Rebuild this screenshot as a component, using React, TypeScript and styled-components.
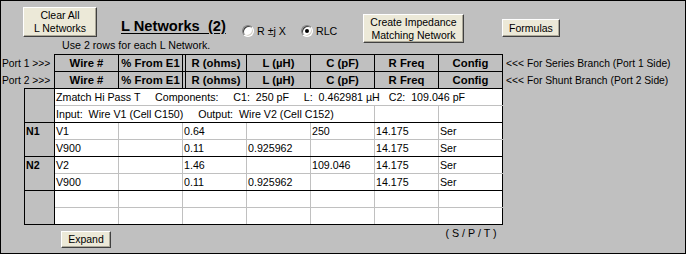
import React from "react";
import styled, { createGlobalStyle } from "styled-components";

const Global = createGlobalStyle`
  html, body { margin: 0; padding: 0; background: #c0c0c0; }
  body { font-family: "Liberation Sans", Arial, sans-serif; }
`;

const COL = 64;

const Panel = styled.div`
  width: 686px;
  height: 254px;
  box-sizing: border-box;
  border: 1px solid #000;
  background: #c0c0c0;
  color: #000;
  font-family: "Liberation Sans", Arial, sans-serif;
  font-size: 10.667px;
  display: flex;
  flex-direction: column;
  overflow: hidden;
`;

const Toolbar = styled.div`
  height: 36px;
  flex: none;
  display: flex;
  align-items: flex-start;
`;

const Button = styled.button<{ $w: number; $h: number; $mt: number; $ml: number }>`
  box-sizing: border-box;
  width: ${(p) => p.$w}px;
  height: ${(p) => p.$h}px;
  margin: ${(p) => p.$mt}px 0 0 ${(p) => p.$ml}px;
  padding: 0;
  flex: none;
  background: #ece9d8;
  border: 1px solid;
  border-color: #ffffff #404040 #404040 #ffffff;
  box-shadow: inset -1px -1px 0 #aca899;
  font-family: "Liberation Sans", Arial, sans-serif;
  font-size: 10.5px;
  line-height: 13px;
  color: #000;
  text-align: center;
  display: flex;
  flex-direction: column;
  align-items: center;
  justify-content: center;
`;

const Title = styled.div`
  width: 107px;
  margin: 17px 0 0 24px;
  flex: none;
  font-size: 14.667px;
  font-weight: bold;
  line-height: 17px;
  text-decoration: underline;
  text-underline-offset: 2px;
  white-space: pre;
`;

const RadioOption = styled.label<{ $w: number; $ml: number }>`
  width: ${(p) => p.$w}px;
  margin: 21px 0 0 ${(p) => p.$ml}px;
  flex: none;
  height: 17px;
  display: flex;
  align-items: center;
  gap: 3px;
  white-space: pre;
`;

const RadioCircle = styled.span<{ $on: boolean }>`
  box-sizing: border-box;
  width: 12px;
  height: 12px;
  border-radius: 50%;
  background: #fff;
  border: 1px solid;
  border-color: #808080 #ffffff #ffffff #808080;
  box-shadow: inset 1px 1px 0 #404040, inset -1px -1px 0 #d4d0c8;
  display: flex;
  align-items: center;
  justify-content: center;
  flex: none;
  &::after {
    content: "";
    width: 4px;
    height: 4px;
    border-radius: 50%;
    background: ${(p) => (p.$on ? "#000" : "transparent")};
  }
`;

const NoteRow = styled.div`
  height: 17px;
  flex: none;
  line-height: 17px;
  padding-left: 61px;
  white-space: pre;
`;

const HeaderRow = styled.div<{ $first: boolean }>`
  display: flex;
  flex: none;
  height: ${(p) => (p.$first ? 18 : 16)}px;
`;

const PortLabel = styled.div`
  width: 53px;
  flex: none;
  box-sizing: border-box;
  padding-left: 1px;
  display: flex;
  align-items: center;
  font-size: 10.3px;
  white-space: pre;
`;

const HCells = styled.div<{ $first: boolean }>`
  display: flex;
  flex: none;
  border-left: 1px solid #000;
  border-top: ${(p) => (p.$first ? "1px solid #000" : "none")};
`;

const HCell = styled.div<{ $first: boolean; $split?: boolean }>`
  box-sizing: border-box;
  width: ${(p) => (p.$split ? COL - 2 : COL)}px;
  flex: none;
  border-right: 1px solid #000;
  border-left: ${(p) => (p.$split ? "1px solid #000" : "none")};
  border-bottom: ${(p) => (p.$first ? "1px solid #000" : "none")};
  font-size: 11.3px;
  font-weight: bold;
  line-height: 16px;
  text-align: center;
  white-space: pre;
`;

const HGap = styled.div<{ $first: boolean }>`
  width: 2px;
  flex: none;
  box-sizing: border-box;
  border-bottom: ${(p) => (p.$first ? "1px solid #000" : "none")};
`;

const SideNote = styled.div`
  padding-left: 3px;
  display: flex;
  align-items: center;
  font-size: 10.3px;
  white-space: pre;
`;

const BodyTable = styled.div`
  margin-left: 23px;
  width: 479px;
  box-sizing: border-box;
  border-left: 1px solid #000;
  border-top: 1px solid #000;
  flex: none;
  display: flex;
  flex-direction: column;
`;

const Group = styled.div`
  display: flex;
`;

const GroupLabel = styled.div`
  box-sizing: border-box;
  width: 30px;
  flex: none;
  background: #c0c0c0;
  border-right: 1px solid #000;
  border-bottom: 1px solid #000;
  padding-left: 1px;
  font-weight: bold;
  line-height: 16px;
`;

const GroupRows = styled.div`
  display: flex;
  flex-direction: column;
`;

const Row = styled.div<{ $end: boolean }>`
  display: flex;
  box-sizing: border-box;
  height: 17px;
  background: #fff;
  border-bottom: 1px solid ${(p) => (p.$end ? "#000" : "#c0c0c0")};
`;

const Cell = styled.div<{ $span: number }>`
  box-sizing: border-box;
  width: ${(p) => p.$span * COL}px;
  flex: none;
  height: 16px;
  line-height: 16px;
  padding-left: 1px;
  border-right: 1px solid #c0c0c0;
  white-space: pre;
  &:last-child {
    border-right-color: #000;
  }
`;

const Footer = styled.div`
  display: flex;
  align-items: flex-start;
  flex: none;
`;

const FooterNote = styled.div`
  width: ${COL}px;
  margin: 0 182px 0 auto;
  line-height: 17px;
  text-align: center;
  white-space: pre;
`;

type CellDef = { span: number; text: string };
type RowDef = CellDef[];
type GroupDef = { label: string; rows: RowDef[] };

const plain = (vals: string[]): RowDef => vals.map((text) => ({ span: 1, text }));

const groups: GroupDef[] = [
  {
    label: "",
    rows: [
      [
        {
          span: 7,
          text: "Zmatch Hi Pass T     Components:     C1:  250 pF     L:  0.462981 \u00b5H   C2:  109.046 pF",
        },
      ],
      [
        { span: 5, text: "Input:  Wire V1 (Cell C150)     Output:  Wire V2 (Cell C152)" },
        { span: 1, text: "" },
        { span: 1, text: "" },
      ],
    ],
  },
  {
    label: "N1",
    rows: [
      plain(["V1", "", "0.64", "", "250", "14.175", "Ser"]),
      plain(["V900", "", "0.11", "0.925962", "", "14.175", "Ser"]),
    ],
  },
  {
    label: "N2",
    rows: [
      plain(["V2", "", "1.46", "", "109.046", "14.175", "Ser"]),
      plain(["V900", "", "0.11", "0.925962", "", "14.175", "Ser"]),
    ],
  },
  {
    label: "",
    rows: [plain(["", "", "", "", "", "", ""]), plain(["", "", "", "", "", "", ""])],
  },
];

const headers = ["Wire #", "% From E1", "R (ohms)", "L (\u00b5H)", "C (pF)", "R Freq", "Config"];

const headerRows = [
  { port: "Port 1 >>>", note: "<<< For Series Branch (Port 1 Side)" },
  { port: "Port 2 >>>", note: "<<< For Shunt Branch (Port 2 Side)" },
];

export default function App() {
  return (
    <>
      <Global />
      <Panel>
        <Toolbar>
          <Button $w={74} $h={30} $mt={6} $ml={22}>
            <span>Clear All</span>
            <span>L Networks</span>
          </Button>
          <Title>{"L Networks  (2)"}</Title>
          <RadioOption $w={59} $ml={14}>
            <RadioCircle $on={false} />
            <span>R ±j X</span>
          </RadioOption>
          <RadioOption $w={62} $ml={0}>
            <RadioCircle $on={true} />
            <span>RLC</span>
          </RadioOption>
          <Button $w={101} $h={29} $mt={13} $ml={0}>
            <span>Create Impedance</span>
            <span>Matching Network</span>
          </Button>
          <Button $w={58} $h={18} $mt={18} $ml={38}>
            <span>Formulas</span>
          </Button>
        </Toolbar>
        <NoteRow>Use 2 rows for each L Network.</NoteRow>
        {headerRows.map((hr, i) => {
          const first = i === 0;
          return (
            <HeaderRow key={hr.port} $first={first}>
              <PortLabel>{hr.port}</PortLabel>
              <HCells $first={first}>
                {headers.map((h, j) => (
                  <React.Fragment key={h}>
                    {j === 2 && <HGap $first={first} />}
                    <HCell $first={first} $split={j === 2}>
                      {h}
                    </HCell>
                  </React.Fragment>
                ))}
              </HCells>
              <SideNote>{hr.note}</SideNote>
            </HeaderRow>
          );
        })}
        <BodyTable>
          {groups.map((g, gi) => (
            <Group key={gi}>
              <GroupLabel>{g.label}</GroupLabel>
              <GroupRows>
                {g.rows.map((r, ri) => (
                  <Row key={ri} $end={ri === g.rows.length - 1}>
                    {r.map((c, ci) => (
                      <Cell key={ci} $span={c.span}>
                        {c.text}
                      </Cell>
                    ))}
                  </Row>
                ))}
              </GroupRows>
            </Group>
          ))}
        </BodyTable>
        <Footer>
          <Button $w={50} $h={17} $mt={6} $ml={60}>
            <span>Expand</span>
          </Button>
          <FooterNote>( S / P / T )</FooterNote>
        </Footer>
      </Panel>
    </>
  );
}
